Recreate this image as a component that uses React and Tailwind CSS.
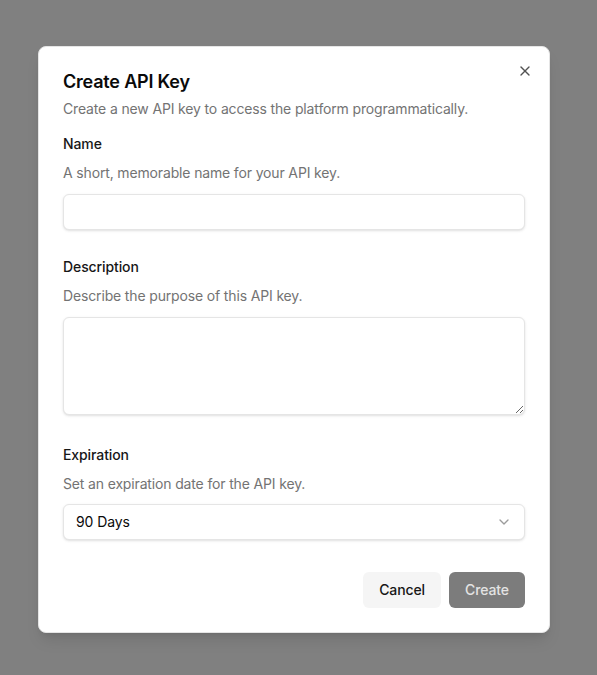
import React, { useState } from "react";
import { X, ChevronDown } from "lucide-react";

const FieldLabel = ({ children, className = "" }) => (
  <label className={`block text-sm font-medium leading-none tracking-[-0.1px] text-[#171717] ${className}`}>
    {children}
  </label>
);

const Helper = ({ children }) => (
  <p className="mt-3 text-sm leading-5 tracking-[-0.15px] text-[#737373]">{children}</p>
);

const CreateApiKeyDialog = () => {
  const [name, setName] = useState("");
  const [description, setDescription] = useState("");
  const [expiration, setExpiration] = useState("90");

  return (
    <div className="relative w-[512px] rounded-lg border border-[#e5e5e5] bg-white p-6 shadow-lg">
      <button className="absolute right-4 top-4 rounded-sm text-[#0a0a0a] opacity-70 hover:opacity-100">
        <X className="h-4 w-4" strokeWidth={2} />
      </button>

      {/* header */}
      <div>
        <h2 className="mt-[2px] text-lg font-semibold leading-none tracking-[-0.2px] text-[#0a0a0a]">
          Create API Key
        </h2>
        <p className="mt-[8px] text-sm leading-5 tracking-[-0.15px] text-[#737373]">
          Create a new API key to access the platform programmatically.
        </p>
      </div>

      <div className="mt-[18px]">
        <FieldLabel>Name</FieldLabel>
        <Helper>A short, memorable name for your API key.</Helper>
        <input
          value={name}
          onChange={(e) => setName(e.target.value)}
          className="mt-[11px] block h-9 w-full rounded-md border border-[#e5e5e5] bg-white px-3 text-sm text-[#0a0a0a] shadow-sm outline-none"
        />
      </div>

      <div className="mt-[30px]">
        <FieldLabel>Description</FieldLabel>
        <Helper>Describe the purpose of this API key.</Helper>
        <textarea
          value={description}
          onChange={(e) => setDescription(e.target.value)}
          className="mt-[11px] block h-[98px] w-full rounded-md border border-[#e5e5e5] bg-white px-3 py-2 text-sm text-[#0a0a0a] shadow-sm outline-none"
        />
      </div>

      <div className="mt-[33px]">
        <FieldLabel>Expiration</FieldLabel>
        <Helper>Set an expiration date for the API key.</Helper>
        <div className="relative mt-[10px]">
          <select
            value={expiration}
            onChange={(e) => setExpiration(e.target.value)}
            className="block h-9 w-full appearance-none rounded-md border border-[#e5e5e5] bg-white px-3 text-sm tracking-[-0.1px] text-[#0a0a0a] shadow-sm outline-none"
          >
            <option value="30">30 Days</option>
            <option value="60">60 Days</option>
            <option value="90">90 Days</option>
            <option value="never">Never</option>
          </select>
          <ChevronDown className="pointer-events-none absolute right-[13px] top-[10px] h-4 w-4 text-[#0a0a0a] opacity-40" />
        </div>
      </div>

      <div className="mt-8 flex justify-end gap-2">
        <button className="h-9 rounded-md bg-[#f5f5f5] px-4 text-sm font-medium tracking-[-0.1px] text-[#171717]">
          Cancel
        </button>
        <button className="h-9 rounded-md bg-[#7c7c7c] px-4 text-sm font-medium tracking-[-0.1px] text-[#e3e3e3]">
          Create
        </button>
      </div>
    </div>
  );
};

export default function App() {
  return (
    <div
      className="h-[675px] w-full bg-[#808080] pl-[38px] pt-[46px]"
      style={{ fontFamily: "Inter, 'Noto Sans', sans-serif" }}
    >
      <CreateApiKeyDialog />
    </div>
  );
}
